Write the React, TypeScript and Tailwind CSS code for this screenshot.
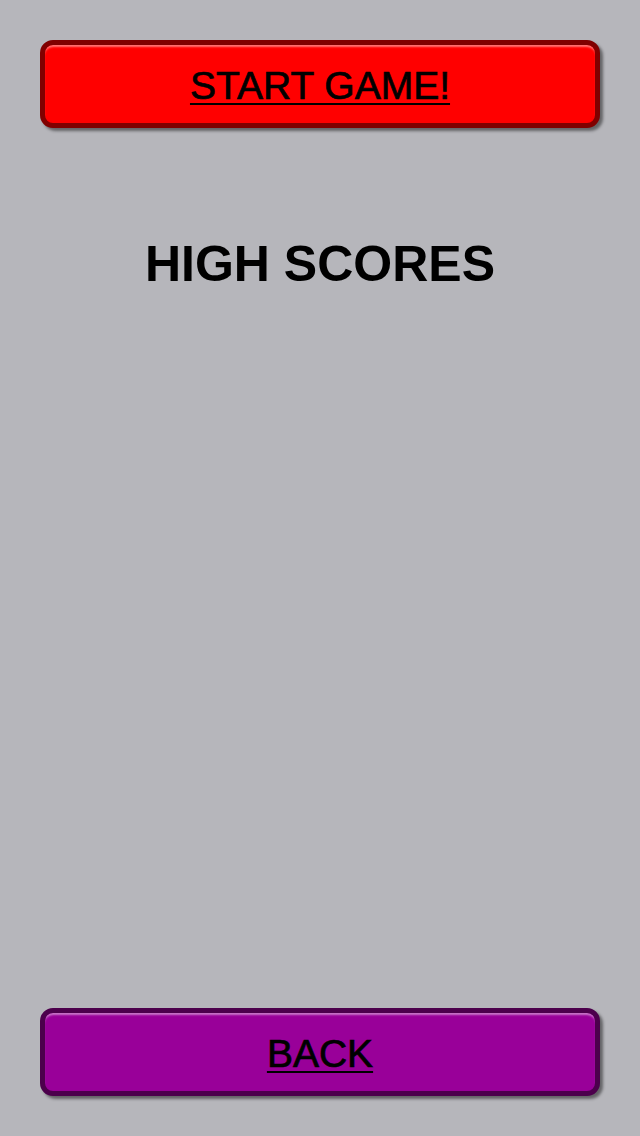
import React from "react";

const GameButton = ({ label, tone }: { label: string; tone: "red" | "purple" }) => {
	const styles =
		tone === "red"
			? "bg-[#ff0000] border-[#800000]"
			: "bg-[#990099] border-[#4c004c]";
	return (
		<button
			className={`flex h-[88px] w-full items-center justify-center rounded-[13px] border-[5px] ${styles} shadow-[3px_3px_3px_rgba(0,0,0,0.45),inset_0_3px_2px_-1px_rgba(255,255,255,0.45)]`}
		>
			<span className="pt-[2px] text-[39px] leading-none text-black underline decoration-[2px] underline-offset-[4px] [-webkit-text-stroke:0.7px_black]">
				{label}
			</span>
		</button>
	);
};

export default function App() {
	return (
		<div className="flex h-[1136px] w-[640px] flex-col bg-[#b6b6bb] px-10 pt-10 pb-10 font-['Liberation_Sans',Arial,sans-serif]">
			<GameButton label="START GAME!" tone="red" />

			{/* Title */}
			<h1 className="mt-[111px] text-center text-[50px] font-bold leading-none text-black">
				HIGH SCORES
			</h1>

			<div className="flex-1" />

			<GameButton label="BACK" tone="purple" />
		</div>
	);
}
